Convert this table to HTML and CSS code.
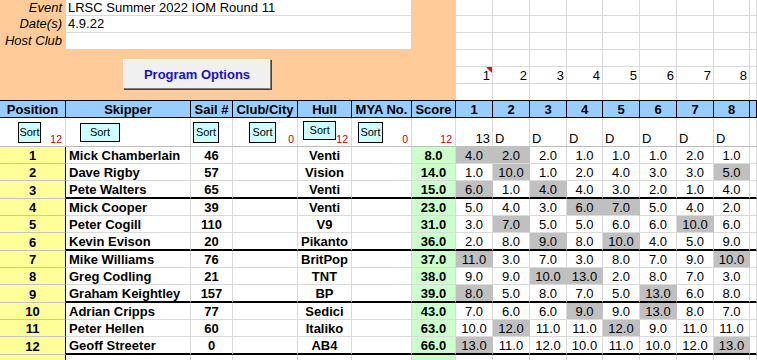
FILE: index.html
```html
<!DOCTYPE html>
<html>
<head>
<meta charset="utf-8">
<link rel="stylesheet" href="styles.css">
</head>
<body>
<div class="top">
  <div class="info">
    <div class="fields">
      <div class="lbl">Event</div><div class="fld">LRSC Summer 2022 IOM Round 11</div>
      <div class="lbl">Date(s)</div><div class="fld">4.9.22</div>
      <div class="lbl">Host Club</div><div class="fld"></div>
    </div>
    <button class="prog">Program Options</button>
  </div>
  <div class="tg">
    <div></div><div></div><div></div><div></div><div></div><div></div><div></div><div></div><div></div>
    <div></div><div></div><div></div><div></div><div></div><div></div><div></div><div></div><div></div>
    <div></div><div></div><div></div><div></div><div></div><div></div><div></div><div></div><div></div>
    <div></div><div></div><div></div><div></div><div></div><div></div><div></div><div></div><div></div>
    <div class="cmt">1</div><div>2</div><div>3</div><div>4</div><div>5</div><div>6</div><div>7</div><div>8</div><div></div>
    <div></div><div></div><div></div><div></div><div></div><div></div><div></div><div></div><div></div>
  </div>
</div>

<div class="hdr">
  <div>Position</div><div>Skipper</div><div>Sail #</div><div>Club/City</div><div>Hull</div><div>MYA No.</div><div>Score</div>
  <div>1</div><div>2</div><div>3</div><div>4</div><div>5</div><div>6</div><div>7</div><div>8</div><div></div>
</div>

<div class="sortrow">
  <div><span class="sb sb-pos">Sort</span><span class="cnt">12</span></div>
  <div><span class="sb sb-skp">Sort</span></div>
  <div><span class="sb sb-sail">Sort</span></div>
  <div><span class="sb sb-club">Sort</span><span class="cnt">0</span></div>
  <div><span class="sb sb-hull">Sort</span><span class="cnt">12</span></div>
  <div><span class="sb sb-mya">Sort</span><span class="cnt">0</span></div>
  <div><span class="cnt">12</span></div>
  <div class="num">13</div><div class="dsc">D</div><div class="dsc">D</div><div class="dsc">D</div><div class="dsc">D</div><div class="dsc">D</div><div class="dsc">D</div><div class="dsc">D</div><div></div>
</div>

<div class="row"><div>1</div><div>Mick Chamberlain</div><div>46</div><div></div><div>Venti</div><div></div><div>8.0</div><div class="x">4.0</div><div class="x">2.0</div><div>2.0</div><div>1.0</div><div>1.0</div><div>1.0</div><div>2.0</div><div>1.0</div><div></div></div>
<div class="row"><div>2</div><div>Dave Rigby</div><div>57</div><div></div><div>Vision</div><div></div><div>14.0</div><div>1.0</div><div class="x">10.0</div><div>1.0</div><div>2.0</div><div>4.0</div><div>3.0</div><div>3.0</div><div class="x">5.0</div><div></div></div>
<div class="row end"><div>3</div><div>Pete Walters</div><div>65</div><div></div><div>Venti</div><div></div><div>15.0</div><div class="x">6.0</div><div>1.0</div><div class="x">4.0</div><div>4.0</div><div>3.0</div><div>2.0</div><div>1.0</div><div>4.0</div><div></div></div>
<div class="row"><div>4</div><div>Mick Cooper</div><div>39</div><div></div><div>Venti</div><div></div><div>23.0</div><div>5.0</div><div>4.0</div><div>3.0</div><div class="x">6.0</div><div class="x">7.0</div><div>5.0</div><div>4.0</div><div>2.0</div><div></div></div>
<div class="row"><div>5</div><div>Peter Cogill</div><div>110</div><div></div><div>V9</div><div></div><div>31.0</div><div>3.0</div><div class="x">7.0</div><div>5.0</div><div>5.0</div><div>6.0</div><div>6.0</div><div class="x">10.0</div><div>6.0</div><div></div></div>
<div class="row end"><div>6</div><div>Kevin Evison</div><div>20</div><div></div><div>Pikanto</div><div></div><div>36.0</div><div>2.0</div><div>8.0</div><div class="x">9.0</div><div>8.0</div><div class="x">10.0</div><div>4.0</div><div>5.0</div><div>9.0</div><div></div></div>
<div class="row"><div>7</div><div>Mike Williams</div><div>76</div><div></div><div>BritPop</div><div></div><div>37.0</div><div class="x">11.0</div><div>3.0</div><div>7.0</div><div>3.0</div><div>8.0</div><div>7.0</div><div>9.0</div><div class="x">10.0</div><div></div></div>
<div class="row"><div>8</div><div>Greg Codling</div><div>21</div><div></div><div>TNT</div><div></div><div>38.0</div><div>9.0</div><div>9.0</div><div class="x">10.0</div><div class="x">13.0</div><div>2.0</div><div>8.0</div><div>7.0</div><div>3.0</div><div></div></div>
<div class="row end"><div>9</div><div>Graham Keightley</div><div>157</div><div></div><div>BP</div><div></div><div>39.0</div><div class="x">8.0</div><div>5.0</div><div>8.0</div><div>7.0</div><div>5.0</div><div class="x">13.0</div><div>6.0</div><div>8.0</div><div></div></div>
<div class="row"><div>10</div><div>Adrian Cripps</div><div>77</div><div></div><div>Sedici</div><div></div><div>43.0</div><div>7.0</div><div>6.0</div><div>6.0</div><div class="x">9.0</div><div>9.0</div><div class="x">13.0</div><div>8.0</div><div>7.0</div><div></div></div>
<div class="row"><div>11</div><div>Peter Hellen</div><div>60</div><div></div><div>Italiko</div><div></div><div>63.0</div><div>10.0</div><div class="x">12.0</div><div>11.0</div><div>11.0</div><div class="x">12.0</div><div>9.0</div><div>11.0</div><div>11.0</div><div></div></div>
<div class="row end"><div>12</div><div>Geoff Streeter</div><div>0</div><div></div><div>AB4</div><div></div><div>66.0</div><div class="x">13.0</div><div>11.0</div><div>12.0</div><div>10.0</div><div>11.0</div><div>10.0</div><div>12.0</div><div class="x">13.0</div><div></div></div>
<div class="row"><div></div><div></div><div></div><div></div><div></div><div></div><div></div><div></div><div></div><div></div><div></div><div></div><div></div><div></div><div></div><div></div></div>
</body>
</html>
```
FILE: styles.css
```css
html, body {
  margin: 0;
  padding: 0;
}
body {
  width: 757px;
  height: 360px;
  overflow: hidden;
  background: #fff;
  color: #000;
  font-family: "Liberation Sans", Arial, sans-serif;
  font-size: 13px;
}

/* ---------- top block ---------- */
.top {
  display: flex;
  height: 100px;
}
.info {
  flex: none;
  width: 456px;
  background: #ffcc99;
}
.fields {
  display: grid;
  grid-template-columns: 66px 345px;
  grid-template-rows: 16px 17px 16px;
}
.lbl {
  font-style: italic;
  text-align: right;
  padding-right: 4px;
  line-height: 16px;
  white-space: nowrap;
}
.fld {
  background: #fff;
  padding-left: 2px;
  line-height: 16px;
  border-bottom: 1px solid #dadada;
  white-space: nowrap;
}
.fields .fld:last-child {
  border-bottom: none;
}
.prog {
  display: block;
  box-sizing: border-box;
  width: 148px;
  height: 30px;
  margin: 10px 0 0 123px;
  padding: 0;
  background: #f0f0f0;
  border: 1px solid;
  border-color: #ffffff #808080 #808080 #ffffff;
  box-shadow: 1px 1px 0 #404040;
  font-family: "Liberation Sans", Arial, sans-serif;
  font-size: 13px;
  font-weight: bold;
  color: #1414c4;
}

.tg {
  flex: 1;
  display: grid;
  grid-template-columns: 37px 37px 37px 36px 37px 37px 37px 36px 1fr;
  grid-template-rows: 16px 17px 17px 17px 17px 16px;
}
.tg > div {
  box-sizing: border-box;
  border-right: 1px solid #dadada;
  border-bottom: 1px solid #dadada;
  display: flex;
  align-items: flex-end;
  justify-content: flex-end;
  padding-right: 2px;
  line-height: 15px;
}
.tg > div:nth-last-child(-n+9) {
  border-bottom: none;
}
.cmt {
  position: relative;
}
.cmt::after {
  content: "";
  position: absolute;
  top: 0;
  right: 0;
  border-top: 6px solid #ff0000;
  border-left: 6px solid transparent;
}

/* ---------- sheet rows ---------- */
.hdr, .sortrow, .row {
  display: grid;
  grid-template-columns: 66px 125px 42px 65px 54px 60px 44px 37px 37px 37px 36px 37px 37px 37px 36px 1fr;
}
.hdr {
  height: 18px;
  border-top: 1px solid #000;
  box-sizing: border-box;
}
.hdr > div {
  box-sizing: border-box;
  background: #99ccff;
  border-right: 1px solid #000;
  border-bottom: 1px solid #000;
  font-weight: bold;
  text-align: center;
  line-height: 15px;
  padding-top: 1px;
  white-space: nowrap;
  overflow: hidden;
}

.sortrow {
  height: 29px;
}
.sortrow > div {
  box-sizing: border-box;
  border-right: 1px solid #dadada;
  border-bottom: 1px solid #bdbdbd;
  display: flex;
  align-items: flex-start;
  white-space: nowrap;
}
.sb {
  box-sizing: border-box;
  height: 21px;
  margin-top: 4px;
  border: 1px solid #000;
  background: #ccffff;
  font-size: 11px;
  line-height: 19px;
  text-align: center;
}
.sb-pos { width: 23px; margin-left: 18px; }
.sb-skp { width: 40px; margin-left: 14px; height: 19px; line-height: 17px; margin-top: 5px; }
.sb-sail { width: 26px; margin-left: 2px; }
.sb-club { width: 27px; margin-left: 16px; }
.sb-hull { width: 36px; margin-left: 5px; height: 19px; line-height: 16px; margin-top: 3px; }
.sb-mya { width: 25px; margin-left: 6px; }
.cnt {
  margin-left: auto;
  align-self: flex-end;
  padding-right: 3px;
  margin-bottom: 1px;
  color: #c80000;
  font-size: 10.5px;
  line-height: 11px;
}
.sortrow > .num,
.sortrow > .dsc {
  align-items: flex-end;
  line-height: 15px;
}
.sortrow > .num {
  justify-content: flex-end;
  padding-right: 2px;
}
.sortrow > .dsc {
  padding-left: 2px;
}

.row {
  height: 17px;
}
.row.end {
  height: 18px;
}
.row > div {
  box-sizing: border-box;
  border-right: 1px solid #dadada;
  border-bottom: 1px solid #dadada;
  display: flex;
  align-items: flex-end;
  justify-content: center;
  line-height: 15px;
  white-space: nowrap;
  overflow: hidden;
}
.row.end > div {
  border-bottom: 2px solid #000;
}
.row > div:nth-child(1) {
  background: #ffff99;
  border-right-color: #000;
  border-bottom: 1px solid #c4c4c4;
  font-weight: bold;
}
.row > div:nth-child(2) {
  justify-content: flex-start;
  padding-left: 3px;
  font-weight: bold;
}
.row > div:nth-child(3),
.row > div:nth-child(5),
.row > div:nth-child(7) {
  font-weight: bold;
}
.row > div:nth-child(7) {
  background: #ccffcc;
}
.row > .x {
  background: #c0c0c0;
  border-right-color: #c0c0c0;
}
```
